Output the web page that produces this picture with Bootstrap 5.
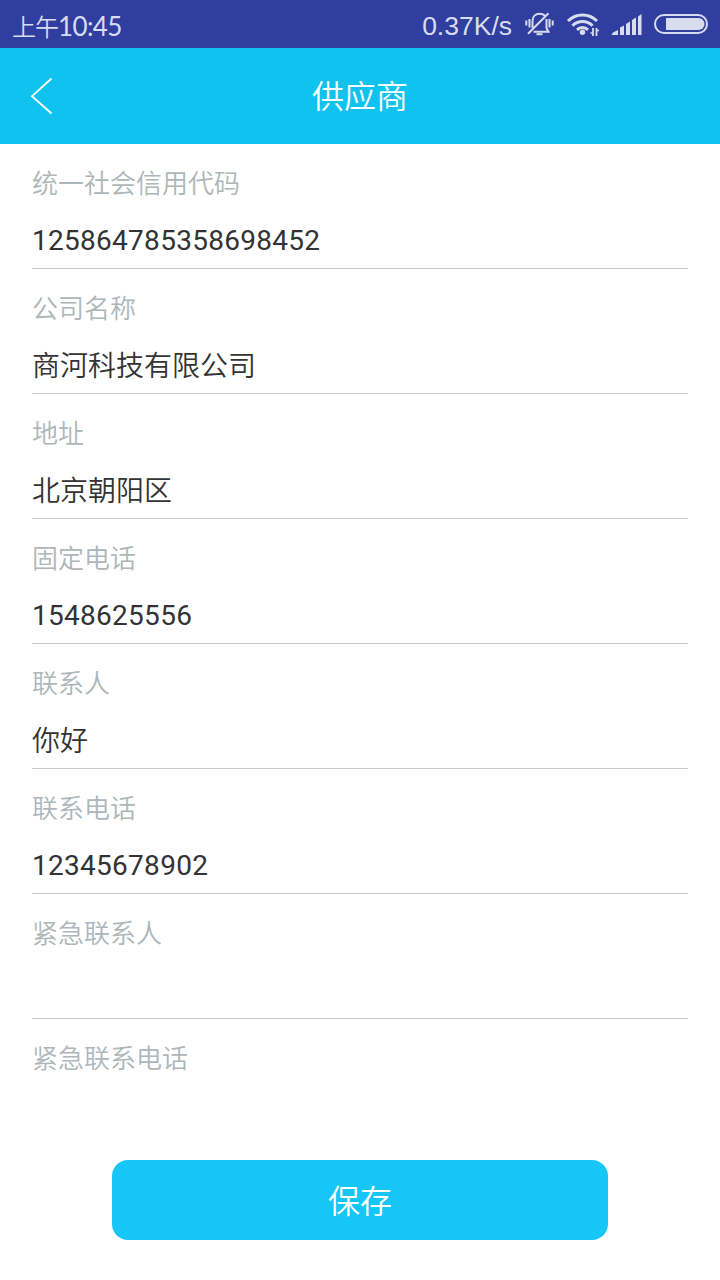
<!DOCTYPE html>
<html lang="zh-CN">
<head>
<meta charset="utf-8">
<meta name="viewport" content="width=device-width, initial-scale=1">
<title>供应商</title>
<link href="https://cdn.jsdelivr.net/npm/bootstrap@5.3.0/dist/css/bootstrap.min.css" rel="stylesheet">
<style>
body{font-family:Roboto,"Noto Sans CJK SC",sans-serif;height:1280px;overflow:hidden;color:#333}
.statusbar{height:48px;background:#303f9f;color:#d9dcef;padding:3px 12px 0;font-family:Lato,"Noto Sans CJK SC",sans-serif;font-size:24px;line-height:45px}
.clock{font-size:26px;letter-spacing:-.6px;line-height:46px}
.clock span{font-size:24px;letter-spacing:-1px;font-weight:350}
.rate{font-family:"Liberation Sans",sans-serif;font-size:26.5px;line-height:46px}
.status-icons{width:186px;height:48px;margin:-3px 2px 0 0}
.titlebar{height:96px;background:#10c3ef;padding-left:30px}
.titlebar h1{font-size:32px;line-height:48px;font-weight:350;padding-top:2px}
.back{width:24px;height:38px}
.form-area{height:992px;overflow:hidden;padding:0 32px}
.field{height:125px;border-bottom:1px solid #c8c8c8;padding-top:21px}
.field-name{font-size:26px;line-height:38px;color:#adb6b9;font-weight:350}
.field-value{font-size:28px;line-height:40px;margin-top:19px;padding:0;color:#333;font-weight:350}
.digits{letter-spacing:.28px;margin-top:18px;font-weight:400}
.save{width:496px;height:80px;border-radius:16px;background:#16c6f6;color:#fff;font-size:32px;font-weight:350;line-height:48px;border:0;padding-top:9px}
</style>
</head>
<body class="bg-white d-flex flex-column">
<header>
  <div class="statusbar d-flex justify-content-between">
    <div class="clock text-nowrap"><span>上午</span>10:45</div>
    <div class="d-flex">
      <div class="rate text-nowrap">0.37K/s</div>
      <svg class="status-icons ms-2" viewBox="520 0 186 48" style="overflow:visible" fill="none" stroke="#d9dcef" stroke-width="2">
        <path d="M532.500 28V21C532.500 16 536 13.800 539.500 13.800C542 13.800 544 14.500 545 16M546.500 19V28L548.500 31.800H533.500"/>
        <path d="M528 33.700L548.500 13.200"/>
        <path d="M536.500 34.200H542.500"/>
        <path d="M526.300 20.500V25.500M529.500 19V27.500M549.500 19V27.500M552.700 20.500V25.500" stroke-width="2"/>
        <path d="M568 21A20.500 20.500 0 0 1 597 21M572.500 25.700A14 14 0 0 1 592.500 25.700M577 29.800A8 8 0 0 1 588 29.800" stroke-width="3"/>
        <circle cx="582.500" cy="32.300" r="2.700" fill="#d9dcef" stroke="none"/>
        <path d="M593 28V36M596.500 28V36" stroke-width="1.800"/><path d="M590.500 33H593M597 30.500H599" stroke-width="1.300"/>
        <g fill="#d9dcef" stroke="none"><path d="M611.500 35L613 32.500 618 30V35ZM620 35V27.500L624 25.500V35ZM626 35V24L630 21.500V35ZM632 35V20L636 17.500V35ZM638 35V16.500L641.500 14V35Z"/>
        <path d="M666 18H698.500A6 6 0 0 1 698.500 30H666Z"/></g>
        <rect x="655" y="15" width="52" height="18" rx="9"/>
      </svg>
    </div>
  </div>
  <nav class="titlebar position-relative d-flex align-items-center">
    <svg class="back" viewBox="30 77 24 38" fill="none" stroke="#fff" stroke-width="1.800"><path d="M51.500 78.500L32 96.200 51.500 113.500"/></svg>
    <h1 class="position-absolute start-0 end-0 text-center text-white mb-0">供应商</h1>
  </nav>
</header>
<main class="form-area">
  <div class="field"><div class="field-name">统一社会信用代码</div><div class="field-value digits">125864785358698452</div></div>
  <div class="field"><div class="field-name">公司名称</div><div class="field-value">商河科技有限公司</div></div>
  <div class="field"><div class="field-name">地址</div><div class="field-value">北京朝阳区</div></div>
  <div class="field"><div class="field-name">固定电话</div><div class="field-value digits">1548625556</div></div>
  <div class="field"><div class="field-name">联系人</div><div class="field-value">你好</div></div>
  <div class="field"><div class="field-name">联系电话</div><div class="field-value digits">12345678902</div></div>
  <div class="field"><div class="field-name">紧急联系人</div></div>
  <div class="field border-0"><div class="field-name">紧急联系电话</div></div>
</main>
<footer class="d-flex justify-content-center pt-4">
  <button type="button" class="btn save">保存</button>
</footer>
<script src="https://cdn.jsdelivr.net/npm/bootstrap@5.3.0/dist/js/bootstrap.bundle.min.js"></script>
</body>
</html>
